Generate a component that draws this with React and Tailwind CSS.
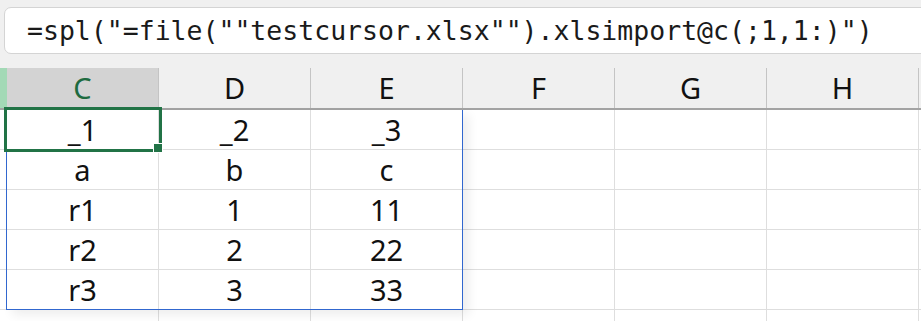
import React from 'react';

const cols = ['C', 'D', 'E', 'F', 'G', 'H'];

const rows = [
  ['_1', '_2', '_3'],
  ['a', 'b', 'c'],
  ['r1', '1', '11'],
  ['r2', '2', '22'],
  ['r3', '3', '33'],
];

export default function App() {
  return (
    <div className="relative w-[921px] h-[321px] overflow-hidden bg-[#f0f0f0] font-['Noto_Sans',sans-serif] text-[#111]">
      {/* formula bar */}
      <div className="pt-[7px] pl-[4px] h-[68px]">
        <div className="flex items-center w-[940px] h-[47px] bg-white border border-[#d4d4d4] rounded-[7px] pl-[22px] font-['DejaVu_Sans_Mono',monospace] text-[26.5px] text-[#1a1a1a] whitespace-pre">
          {'=spl("=file(""testcursor.xlsx"").xlsimport@c(;1,1:)")'}
        </div>
      </div>

      {/* column headers */}
      <div className="flex h-[42px] border-b-2 border-[#a3a3a3]">
        <div className="w-[7px] shrink-0 bg-[#a3d9b6]" />
        {cols.map((c, i) => (
          <div
            key={c}
            className={`w-[152px] shrink-0 flex items-center justify-center border-r border-[#c4c4c4] text-[29px] ${i === 0 ? 'bg-[#d3d3d3] text-[#1e6b40]' : 'text-[#111]'}`}
          >
            {c}
          </div>
        ))}
        <div className="flex-1" />
      </div>

      {/* cells */}
      <div className="bg-white">
        {rows.concat([['', '', '']]).map((r, ri) => (
          <div key={ri} className="flex h-[40px] border-b border-[#dedede]">
            <div className="w-[7px] shrink-0" />
            {cols.map((c, ci) => (
              <div
                key={c}
                className="w-[152px] shrink-0 flex items-center justify-center border-r border-[#dedede] text-[29px] pt-[1px]"
              >
                {r[ci] || ''}
              </div>
            ))}
            <div className="flex-1" />
          </div>
        ))}
      </div>

      {/* table range outline */}
      <div className="absolute left-[6px] top-[110px] w-[457px] h-[200px] border border-t-0 border-[#3167cf] shadow-[6px_5px_10px_rgba(0,0,0,0.07)]" />

      {/* active cell */}
      <div className="absolute left-[4px] top-[107px] w-[158px] h-[45px] border-[3px] border-[#217346]" />
      <div className="absolute left-[153px] top-[143px] w-[10px] h-[10px] bg-[#217346] border border-white" />
    </div>
  );
}
